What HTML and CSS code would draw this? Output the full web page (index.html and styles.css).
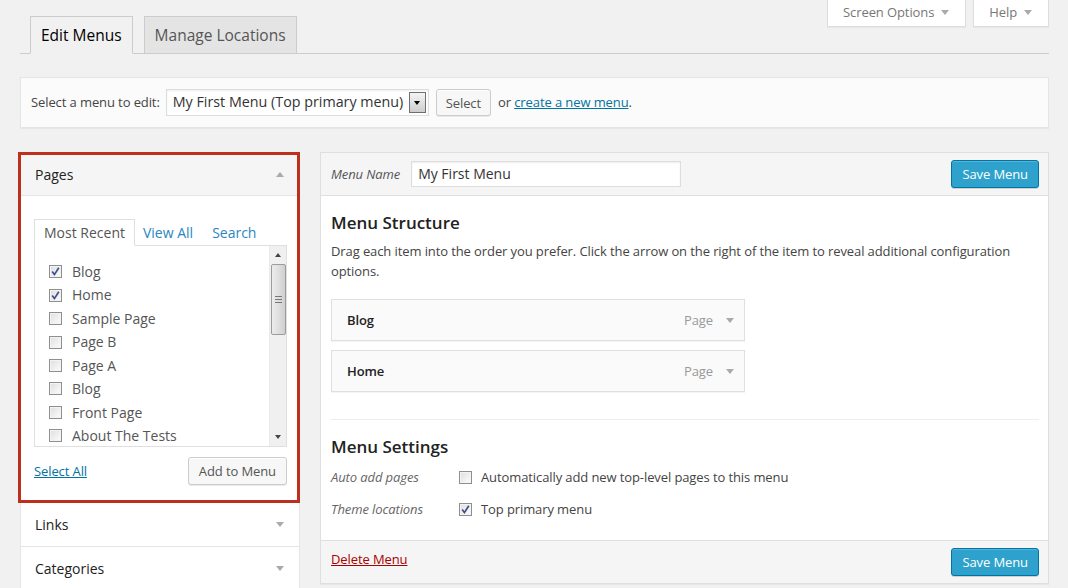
FILE: index.html
```html
<!DOCTYPE html>
<html>
<head>
<meta charset="utf-8">
<title>Menus</title>
<link rel="stylesheet" href="styles.css">
</head>
<body>
<div class="wrap">
  <div class="head">
    <div class="nav-tabs">
      <a class="nav-tab active" href="#">Edit Menus</a>
      <a class="nav-tab" href="#">Manage Locations</a>
    </div>
    <div class="screen-meta">
      <span class="meta-btn">Screen Options<span class="tri-down meta-tri"></span></span>
      <span class="meta-btn">Help<span class="tri-down meta-tri"></span></span>
    </div>
  </div>

  <div class="manage-bar">
    <span class="bar-label">Select a menu to edit:</span>
    <span class="fake-select"><span class="fake-select-text">My First Menu (Top primary menu)</span><span class="fake-select-arrow"></span></span>
    <button class="btn btn-bar">Select</button>
    <span class="bar-or">or <a class="link" href="#">create a new menu</a>.</span>
  </div>

  <div class="columns">
    <div class="left-col">
      <div class="box pages">
        <div class="box-title open">Pages<span class="tri-up"></span></div>
        <div class="inside">
          <div class="mini-tabs">
            <span class="mini-tab active">Most Recent</span>
            <span class="mini-tab view-all">View All</span>
            <span class="mini-tab search">Search</span>
          </div>
          <div class="list-box">
            <ul class="page-list">
              <li><span class="cb"><svg viewBox="0 0 11 11" width="11" height="11"><path d="M2.2 5.6 L4.4 8.6 L8.8 1.8" fill="none" stroke="#3f4f8c" stroke-width="1.7"/></svg></span>Blog</li>
              <li><span class="cb"><svg viewBox="0 0 11 11" width="11" height="11"><path d="M2.2 5.6 L4.4 8.6 L8.8 1.8" fill="none" stroke="#3f4f8c" stroke-width="1.7"/></svg></span>Home</li>
              <li><span class="cb"></span>Sample Page</li>
              <li><span class="cb"></span>Page B</li>
              <li><span class="cb"></span>Page A</li>
              <li><span class="cb"></span>Blog</li>
              <li><span class="cb"></span>Front Page</li>
              <li><span class="cb"></span>About The Tests</li>
            </ul>
            <div class="scrollbar">
              <span class="sb-btn"><span class="sb-up"></span></span>
              <span class="sb-thumb"><span class="grip"></span><span class="grip"></span><span class="grip"></span></span>
              <span class="sb-space"></span>
              <span class="sb-btn"><span class="sb-down"></span></span>
            </div>
          </div>
          <div class="box-actions">
            <a class="link" href="#">Select All</a>
            <button class="btn">Add to Menu</button>
          </div>
        </div>
      </div>
      <div class="box closed">
        <div class="box-title">Links<span class="tri-down"></span></div>
      </div>
      <div class="box closed">
        <div class="box-title">Categories<span class="tri-down"></span></div>
      </div>
    </div>

    <div class="menu-box">
      <div class="menu-head">
        <span class="menu-name-label">Menu Name</span>
        <span class="name-input">My First Menu</span>
        <button class="btn btn-primary">Save Menu</button>
      </div>
      <div class="menu-body">
        <h3 class="section-title">Menu Structure</h3>
        <p class="desc">Drag each item into the order you prefer. Click the arrow on the right of the item to reveal additional configuration options.</p>
        <ul class="menu-items">
          <li class="menu-item"><span class="item-title">Blog</span><span class="item-type">Page</span><span class="tri-down item-tri"></span></li>
          <li class="menu-item"><span class="item-title">Home</span><span class="item-type">Page</span><span class="tri-down item-tri"></span></li>
        </ul>
        <div class="divider"></div>
        <h3 class="section-title">Menu Settings</h3>
        <div class="setting first">
          <span class="setting-label">Auto add pages</span>
          <span class="cb"></span>
          <span class="setting-text">Automatically add new top-level pages to this menu</span>
        </div>
        <div class="setting second">
          <span class="setting-label">Theme locations</span>
          <span class="cb"><svg viewBox="0 0 11 11" width="11" height="11"><path d="M2.2 5.6 L4.4 8.6 L8.8 1.8" fill="none" stroke="#3f4f8c" stroke-width="1.7"/></svg></span>
          <span class="setting-text">Top primary menu</span>
        </div>
      </div>
      <div class="menu-foot">
        <a class="delete-link" href="#">Delete Menu</a>
        <button class="btn btn-primary">Save Menu</button>
      </div>
    </div>
  </div>
</div>
</body>
</html>
```

FILE: styles.css
```css
* { box-sizing: border-box; }

body {
  margin: 0;
  background: #f1f1f1;
  font-family: "Open Sans", "Noto Sans", sans-serif;
  font-size: 13px;
  line-height: 1.4;
  letter-spacing: -0.1px;
  color: #444;
}

.wrap { padding: 0 19px 0 20px; }

/* header tabs */
.head {
  display: flex;
  justify-content: space-between;
  align-items: flex-start;
  border-bottom: 1px solid #ccc;
  padding-left: 10px;
}
.nav-tabs {
  display: flex;
  gap: 11px;
  padding-top: 16px;
}
.nav-tab {
  display: block;
  font-size: 15.5px;
  letter-spacing: 0;
  line-height: 24px;
  padding: 6px 10px;
  border: 1px solid #ccc;
  margin-bottom: -1px;
  background: #e4e4e4;
  color: #555;
  text-decoration: none;
}
.nav-tab.active {
  background: #f1f1f1;
  border-bottom-color: #f1f1f1;
  color: #000;
}

.screen-meta { display: flex; gap: 7px; }
.meta-btn {
  display: flex;
  align-items: center;
  height: 27px;
  padding: 0 16px 2px 15px;
  background: #fff;
  border: 1px solid #ddd;
  border-top: none;
  box-shadow: 0 1px 1px rgba(0,0,0,.04);
  color: #777;
  font-size: 13px;
}
.meta-tri { margin-left: 7px; }

.tri-down {
  display: inline-block;
  width: 0; height: 0;
  border-left: 4px solid transparent;
  border-right: 4px solid transparent;
  border-top: 5px solid #aaa;
}
.tri-up {
  display: inline-block;
  width: 0; height: 0;
  border-left: 4px solid transparent;
  border-right: 4px solid transparent;
  border-bottom: 5px solid #aaa;
}

/* manage bar */
.manage-bar {
  margin-top: 23px;
  height: 51px;
  display: flex;
  align-items: center;
  padding: 0 10px;
  background: #fbfbfb;
  border: 1px solid #e5e5e5;
  box-shadow: 0 1px 1px rgba(0,0,0,.04);
}
.fake-select {
  margin-left: 6px;
  width: 263px;
  height: 27px;
  display: flex;
  align-items: center;
  padding: 0 2px 0 6px;
  background: #fff;
  border: 1px solid #ddd;
  box-shadow: inset 0 1px 2px rgba(0,0,0,.07);
  font-size: 14.3px;
  letter-spacing: 0;
  color: #333;
}
.fake-select-text { flex: 1; white-space: nowrap; }
.fake-select-arrow {
  width: 17px;
  height: 21px;
  border: 1px solid #6f6f6f;
  background: linear-gradient(#f4f4f4, #cdcdcd);
  display: flex;
  align-items: center;
  justify-content: center;
}
.fake-select-arrow::after {
  content: "";
  border-left: 3.5px solid transparent;
  border-right: 3.5px solid transparent;
  border-top: 4px solid #000;
}

.btn {
  height: 28px;
  padding: 0 10px;
  font-family: "Open Sans", "Noto Sans", sans-serif;
  font-size: 13px;
  letter-spacing: -0.1px;
  color: #555;
  background: #f7f7f7;
  border: 1px solid #ccc;
  border-radius: 3px;
  box-shadow: inset 0 1px 0 #fff, 0 1px 0 rgba(0,0,0,.08);
}
.btn-bar { height: 27px; padding: 0 9px; margin-left: 7px; }
.bar-or { margin-left: 7px; }
.link { color: #0074a2; text-decoration: underline; }

.btn-primary {
  margin-left: auto;
  background: #2ea2cc;
  border-color: #0074a2;
  color: #fff;
  box-shadow: inset 0 1px 0 rgba(120,200,230,.5), 0 1px 0 rgba(0,0,0,.15);
}

/* columns */
.columns {
  display: flex;
  align-items: flex-start;
  margin-top: 24px;
}
.left-col { width: 280px; flex-shrink: 0; }

.box {
  background: #fff;
  border: 1px solid #e5e5e5;
  border-top: none;
}
.box.pages {
  margin-left: -2px;
  border: 3px solid #bf2f1d;
}
.box-title {
  height: 43px;
  display: flex;
  align-items: center;
  justify-content: space-between;
  padding: 0 15px 0 14px;
  font-size: 14px;
  letter-spacing: 0;
  color: #222;
}
.box.closed .box-title { border-bottom: none; }
.box-title.open {
  height: 41px;
  padding: 0 13px 1px 14px;
  background: #f5f5f5;
  border-bottom: 1px solid #e5e5e5;
}

.inside { padding: 23px 10px 15px 13px; }

.mini-tabs { display: flex; height: 26px; }
.mini-tab {
  font-size: 14px;
  letter-spacing: 0;
  line-height: 25px;
  padding-top: 1px;
  color: #2a86c0;
}
.mini-tab.active {
  position: relative;
  z-index: 1;
  height: 27px;
  padding: 0 9px;
  border: 1px solid #dfdfdf;
  border-bottom-color: #fff;
  background: #fff;
  color: #555;
}
.mini-tab.view-all { margin-left: 8px; }
.mini-tab.search { margin-left: 19px; }

.list-box {
  height: 202px;
  display: flex;
  border: 1px solid #dfdfdf;
  background: #fff;
}
.page-list {
  flex: 1;
  margin: 0;
  padding: 14px 0 0 14px;
  list-style: none;
  overflow: hidden;
}
.page-list li {
  display: flex;
  align-items: center;
  height: 23.45px;
  font-size: 14px;
  letter-spacing: 0;
  color: #555;
  white-space: nowrap;
}
.page-list .cb { margin-right: 10px; }

.cb {
  width: 13px;
  height: 13px;
  flex-shrink: 0;
  display: inline-flex;
  align-items: center;
  justify-content: center;
  border: 1px solid #8f8f8f;
  background: linear-gradient(135deg, #dedede, #fdfdfd);
  box-shadow: inset 0 0 0 1px #f3f3f3;
}

.scrollbar {
  width: 17px;
  display: flex;
  flex-direction: column;
  align-items: center;
  background: #f0f0f0;
  border-left: 1px solid #eaeaea;
}
.sb-btn {
  height: 18px;
  width: 100%;
  display: flex;
  align-items: center;
  justify-content: center;
}
.sb-up {
  border-left: 3.5px solid transparent;
  border-right: 3.5px solid transparent;
  border-bottom: 4px solid #444;
}
.sb-down {
  border-left: 3.5px solid transparent;
  border-right: 3.5px solid transparent;
  border-top: 4px solid #444;
}
.sb-thumb {
  width: 15px;
  height: 71px;
  display: flex;
  flex-direction: column;
  align-items: center;
  justify-content: center;
  gap: 2px;
  border: 1px solid #9c9c9c;
  border-radius: 2px;
  background: linear-gradient(90deg, #ececec, #dcdcdc 60%, #cfcfcf);
}
.grip { width: 7px; height: 1px; background: #777; }
.sb-space { flex: 1; }

.box-actions {
  margin-top: 10px;
  display: flex;
  justify-content: space-between;
  align-items: center;
}

/* right column */
.menu-box {
  flex: 1;
  margin-left: 20px;
  background: #fff;
  border: 1px solid #dfdfdf;
  box-shadow: 0 1px 1px rgba(0,0,0,.04);
}
.menu-head {
  height: 43px;
  display: flex;
  align-items: center;
  padding: 0 9px 0 10px;
  background: #f5f5f5;
  border-bottom: 1px solid #dfdfdf;
}
.menu-name-label {
  font-style: italic;
  color: #555;
  margin-right: 11px;
}
.name-input {
  width: 270px;
  height: 26px;
  display: flex;
  align-items: center;
  padding: 0 6px;
  background: #fff;
  border: 1px solid #ddd;
  box-shadow: inset 0 1px 2px rgba(0,0,0,.07);
  font-size: 14px;
  letter-spacing: 0;
  color: #333;
}

.menu-body { padding: 0 9px 21px 10px; }
.section-title {
  margin: 15px 0 6px;
  font-size: 17px;
  letter-spacing: 0;
  line-height: 24px;
  font-weight: 600;
  color: #222;
}
.desc { margin: 0; line-height: 20px; }

.menu-items { list-style: none; margin: 18px 0 0; padding: 0; }
.menu-item {
  width: 414px;
  height: 42px;
  display: flex;
  align-items: center;
  padding: 0 10px 0 15px;
  background: #fafafa;
  border: 1px solid #dfdfdf;
  box-shadow: 0 1px 1px rgba(0,0,0,.04);
  font-weight: 600;
  color: #222;
}
.menu-item + .menu-item { margin-top: 9px; }
.item-type { margin-left: auto; font-weight: 400; color: #999; }
.item-tri { margin-left: 13px; }

.divider { margin-top: 27px; border-top: 1px solid #eee; }

.setting { display: flex; align-items: center; height: 20px; }
.setting.first { margin-top: 8px; }
.setting.second { margin-top: 12px; }
.setting-label { width: 128px; font-style: italic; color: #666; }
.setting-text { margin-left: 9px; }

.menu-foot {
  height: 43px;
  display: flex;
  align-items: center;
  padding: 0 9px 0 10px;
  background: #f5f5f5;
  border-top: 1px solid #dfdfdf;
}
.delete-link { color: #a00; text-decoration: underline; padding-bottom: 6px; }
```
